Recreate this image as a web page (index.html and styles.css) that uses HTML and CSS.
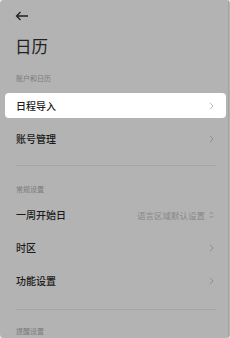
FILE: index.html
```html
<!DOCTYPE html>
<html lang="zh">
<head>
<meta charset="utf-8">
<link rel="stylesheet" href="styles.css">
</head>
<body>
<div class="screen">
  <div class="topbar">
    <svg class="back" width="14" height="10" viewBox="0 0 14 10"><path d="M13 5H1.5M5.5 1L1.5 5L5.5 9" fill="none" stroke="#222" stroke-width="1.3"/></svg>
  </div>
  <div class="title">日历</div>
  <div class="label first">账户和日历</div>
  <div class="row active"><span class="txt">日程导入</span><svg class="chev" width="5" height="8" viewBox="0 0 5 8"><path d="M1 0.8L4 4L1 7.2" fill="none" stroke="#b8b8b8" stroke-width="1"/></svg></div>
  <div class="row"><span class="txt">账号管理</span><svg class="chev" width="5" height="8" viewBox="0 0 5 8"><path d="M1 0.8L4 4L1 7.2" fill="none" stroke="#8e8e8e" stroke-width="1"/></svg></div>
  <div class="divider"></div>
  <div class="label">常规设置</div>
  <div class="row"><span class="txt">一周开始日</span><span class="value">语言区域默认设置<svg class="updown" width="5" height="8" viewBox="0 0 5 8"><path d="M0.8 3L2.5 1.2L4.2 3M0.8 5L2.5 6.8L4.2 5" fill="none" stroke="#8a8a8a" stroke-width="0.9"/></svg></span></div>
  <div class="row"><span class="txt">时区</span><svg class="chev" width="5" height="8" viewBox="0 0 5 8"><path d="M1 0.8L4 4L1 7.2" fill="none" stroke="#8e8e8e" stroke-width="1"/></svg></div>
  <div class="row"><span class="txt">功能设置</span><svg class="chev" width="5" height="8" viewBox="0 0 5 8"><path d="M1 0.8L4 4L1 7.2" fill="none" stroke="#8e8e8e" stroke-width="1"/></svg></div>
  <div class="divider last"></div>
  <div class="label">提醒设置</div>
  <div class="edge"></div>
</div>
</body>
</html>
```
FILE: styles.css
```css
html, body {
  margin: 0;
  padding: 0;
  background: #e8e8e8;
}
body {
  width: 230px;
  height: 338px;
  overflow: hidden;
  font-family: "Noto Sans CJK SC", "Noto Sans", sans-serif;
}
.screen {
  position: relative;
  width: 230px;
  height: 338px;
  background: #b3b3b3;
  border-radius: 4px;
  overflow: hidden;
}
.topbar {
  height: 29px;
  padding: 11px 0 0 15px;
  box-sizing: border-box;
}
.back {
  display: block;
}
.title {
  padding-left: 15px;
  font-size: 16.5px;
  line-height: 22px;
  color: #222;
  height: 29px;
  margin-top: 6px;
}
.label {
  padding-left: 16px;
  font-size: 7px;
  line-height: 10px;
  color: #7a7a7a;
  height: 10px;
  margin-bottom: 4px;
}
.label.first {
  margin-top: 9px;
  margin-bottom: 10px;
}
.row {
  height: 33px;
  padding: 0 16px;
  display: flex;
  align-items: center;
  justify-content: space-between;
}
.row.active {
  height: 25px;
  margin: 0 4px 4px 5px;
  padding: 0 12px 0 11px;
  background: #fff;
  border-radius: 4px;
}
.txt {
  font-size: 10px;
  font-weight: 500;
  color: #1a1a1a;
}
.chev {
  display: block;
  margin-right: 0;
}
.row.active .chev {
  margin-right: 0;
}
.value {
  display: flex;
  align-items: center;
  gap: 4px;
  font-size: 8.5px;
  color: #888;
  margin-right: 0;
}
.updown {
  display: block;
}
.divider {
  height: 1px;
  margin: 10px 14px 18px 16px;
  background: #a6a6a6;
}
.divider.last {
  margin-top: 12px;
  margin-bottom: 16px;
}
.edge {
  position: absolute;
  top: 0;
  right: 1px;
  width: 1px;
  height: 338px;
  background: #a4a4a4;
}
```
